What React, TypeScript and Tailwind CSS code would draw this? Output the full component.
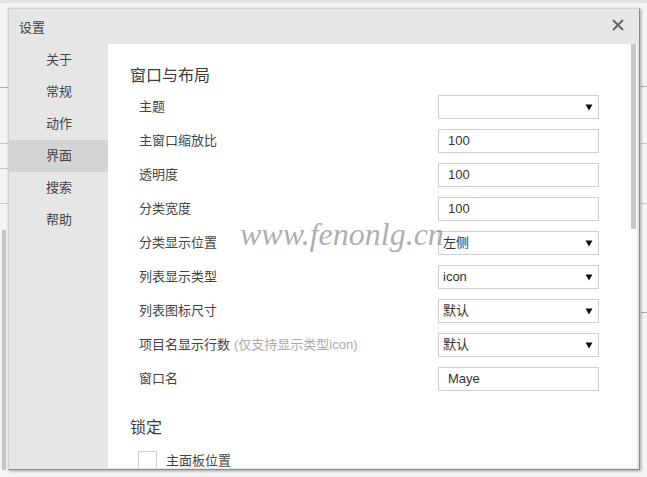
import React from 'react';

type Row = { label: string; hint?: string; type: 'select' | 'input'; value: string };

const rows: Row[] = [
  { label: '主题', type: 'select', value: '' },
  { label: '主窗口缩放比', type: 'input', value: '100' },
  { label: '透明度', type: 'input', value: '100' },
  { label: '分类宽度', type: 'input', value: '100' },
  { label: '分类显示位置', type: 'select', value: '左侧' },
  { label: '列表显示类型', type: 'select', value: 'icon' },
  { label: '列表图标尺寸', type: 'select', value: '默认' },
  { label: '项目名显示行数', hint: '(仅支持显示类型icon)', type: 'select', value: '默认' },
  { label: '窗口名', type: 'input', value: 'Maye' },
];

const nav = ['关于', '常规', '动作', '界面', '搜索', '帮助'];

function Arrow() {
  return (
    <svg width="8" height="7" viewBox="0 0 8 7" className="mr-[5px] shrink-0">
      <polygon points="0.5,0.5 7.5,0.5 4,6.5" fill="#111" />
    </svg>
  );
}

export default function App() {
  return (
    <div className="relative w-[647px] h-[477px] overflow-hidden bg-[#f4f4f4] pt-[8px] pl-[8px] font-['Liberation_Sans','Noto_Sans_CJK_SC',sans-serif] text-[#333]">
      {/* background app hints */}
      <div className="absolute left-0 top-0 w-[647px] h-[3px] bg-[#e2e2e2]" />
      <div className="absolute left-[2px] top-[230px] w-[4px] h-[240px] bg-[#c4c4c4]" />
      <div className="absolute left-0 top-[87px] w-[8px] h-px bg-[#b0b0b0]" />
      <div className="absolute left-0 top-[143px] w-[8px] h-px bg-[#c8c8c8]" />
      <div className="absolute left-0 top-[168px] w-[8px] h-px bg-[#c8c8c8]" />
      <div className="absolute left-0 top-[203px] w-[8px] h-px bg-[#c8c8c8]" />
      <div className="absolute left-[641px] top-[86px] w-[6px] h-px bg-[#aaaaaa]" />
      <div className="absolute left-[641px] top-[143px] w-[6px] h-px bg-[#cccccc]" />
      <div className="absolute left-[641px] top-[203px] w-[6px] h-px bg-[#cccccc]" />
      <div className="absolute left-[641px] top-[312px] w-[6px] h-px bg-[#aaaaaa]" />

      <div className="relative w-[632px] h-[462px] bg-[#e6e6e6] border border-t-[#d0d0d0] border-l-[#d0d0d0] border-r-[#8a8a8a] border-b-[#8a8a8a] shadow-[1px_1px_3px_rgba(0,0,0,0.35)] flex flex-col">
        <div className="h-[35px] shrink-0 flex items-center justify-between pl-[10px] pr-[15px]">
          <span className="text-[13px] leading-[18px] text-[#444] mt-[2px]">设置</span>
          <svg width="12" height="12" viewBox="0 0 12 12" className="mt-[-3px]">
            <path d="M1 1 L11 11 M11 1 L1 11" stroke="#666" strokeWidth="2" />
          </svg>
        </div>
        <div className="flex h-[424px]">
          <div className="w-[99px] shrink-0 flex flex-col">
            {nav.map((n) => (
              <div
                key={n}
                className={`h-[32px] flex items-center pl-[37px] text-[13px] leading-[18px] text-[#444] ${n === '界面' ? 'bg-[#d4d4d4]' : ''}`}
              >
                {n}
              </div>
            ))}
          </div>
          <div className="relative w-[529px] h-[424px] bg-white overflow-hidden pt-[22px] pl-[22px]">
            <div className="absolute right-[1px] top-0 w-[5px] h-[185px] bg-[#c8c8c8]" />
            <div className="text-[16px] leading-[20px] text-[#3c3c3c]">窗口与布局</div>
            <div className="mt-[4px] flex flex-col">
              {rows.map((r) => (
                <div key={r.label} className="h-[34px] flex items-center pl-[9px] pr-[38px]">
                  <div className="flex-1 text-[13px] leading-[18px] text-[#444]">
                    {r.label}
                    {r.hint && <span className="ml-[4px] text-[#aaa]">{r.hint}</span>}
                  </div>
                  <div
                    className={`w-[161px] h-[24px] border border-[#cfcfcf] flex items-center justify-between text-[13px] leading-[18px] text-[#333] ${r.type === 'select' ? 'pl-[4px]' : 'pl-[9px]'}`}
                  >
                    <span>{r.value}</span>
                    {r.type === 'select' && <Arrow />}
                  </div>
                </div>
              ))}
            </div>
            <div className="mt-[22px] text-[16px] leading-[20px] text-[#3c3c3c]">锁定</div>
            <div className="mt-[13px] flex items-center pl-[8px]">
              <div className="w-[19px] h-[19px] border border-[#cfcfcf]" />
              <span className="ml-[9px] text-[13px] leading-[18px] text-[#444]">主面板位置</span>
            </div>
          </div>
        </div>
      </div>

      <div className="absolute left-[240px] top-[214px] text-[32px] leading-[40px] italic text-[rgba(120,120,120,0.6)] font-['Liberation_Serif',serif] pointer-events-none">
        www.fenonlg.cn
      </div>
    </div>
  );
}
